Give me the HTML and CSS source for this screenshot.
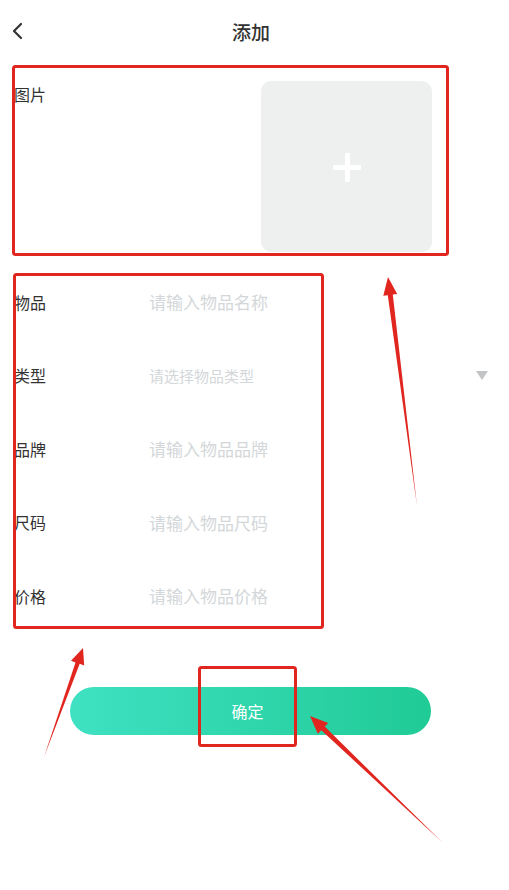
FILE: index.html
```html
<!DOCTYPE html>
<html lang="zh-CN">
<head>
    <meta charset="UTF-8">
    <meta name="viewport" content="width=device-width, initial-scale=1.0">
    <title>添加</title>
    <link rel="stylesheet" href="styles.css">
</head>
<body>
    <div class="page">
        <div class="header">
            <a class="back" href="#">
                <svg width="14" height="18" viewBox="0 0 14 18">
                    <polyline points="10,2 3,9 10,16" fill="none" stroke="#333" stroke-width="2.2" stroke-linecap="round" stroke-linejoin="round"/>
                </svg>
            </a>
            <h1 class="title">添加</h1>
            <span></span>
        </div>

        <div class="photo-row">
            <span class="label photo-label">图片</span>
            <div class="upload">
                <span class="plus"></span>
            </div>
        </div>

        <div class="form">
            <div class="row">
                <span class="label">物品</span>
                <span class="placeholder">请输入物品名称</span>
            </div>
            <div class="row">
                <span class="label">类型</span>
                <span class="placeholder small">请选择物品类型</span>
                <span class="arrow-down"></span>
            </div>
            <div class="row">
                <span class="label">品牌</span>
                <span class="placeholder">请输入物品品牌</span>
            </div>
            <div class="row">
                <span class="label">尺码</span>
                <span class="placeholder">请输入物品尺码</span>
            </div>
            <div class="row">
                <span class="label">价格</span>
                <span class="placeholder">请输入物品价格</span>
            </div>
        </div>

        <button class="submit">确定</button>

        <!-- annotation marks drawn over the screen -->
        <svg class="marks" width="509" height="890" viewBox="0 0 509 890">
            <g fill="none" stroke="#e0261f" stroke-width="3">
                <rect x="13.5" y="66.5" width="434" height="188" rx="2"/>
                <rect x="14.5" y="274.5" width="308" height="353" rx="2"/>
                <rect x="199.5" y="667.5" width="96" height="78" rx="2"/>
            </g>
            <g fill="#e0261f">
                <polygon points="388,277 397.2,294 392.8,294.6 417,506 387.8,295.2 383.3,295.8"/>
                <polygon points="83,648 84.2,665.4 79.7,663.8 44,757 75.5,662.4 71,660.7"/>
                <polygon points="310,716 328.2,723 324.7,726.6 443,843 321.3,730.2 317.8,733.8"/>
            </g>
        </svg>
    </div>
</body>
</html>
```

FILE: styles.css
```css
body {
    margin: 0;
    background-color: #ffffff;
    font-family: "Noto Sans CJK SC", "Noto Sans", sans-serif;
    color: #333333;
}
.page {
    position: relative;
    width: 509px;
    height: 890px;
    overflow: hidden;
}
.header {
    display: grid;
    grid-template-columns: 60px 1fr 60px;
    align-items: center;
    height: 62px;
}
.back {
    display: flex;
    padding-left: 11px;
}
.title {
    margin: 0;
    padding-right: 7px;
    text-align: center;
    font-size: 19px;
    font-weight: 500;
    color: #333333;
}
.photo-row {
    display: flex;
    margin-top: 19px;
    padding-left: 14px;
}
.label {
    font-size: 16px;
    color: #333333;
}
.photo-label {
    line-height: 22px;
    padding-top: 2px;
}
.upload {
    display: flex;
    align-items: center;
    justify-content: center;
    width: 171px;
    height: 171px;
    margin-left: auto;
    margin-right: 77px;
    border-radius: 10px;
    background-color: #edf0ef;
}
.plus {
    position: relative;
    width: 28px;
    height: 28px;
}
.plus::before,
.plus::after {
    content: "";
    position: absolute;
    background-color: #ffffff;
    border-radius: 1px;
}
.plus::before {
    left: 0;
    top: 12px;
    width: 28px;
    height: 5px;
}
.plus::after {
    left: 12px;
    top: 0;
    width: 5px;
    height: 29px;
}
.form {
    margin-top: 13px;
}
.row {
    display: flex;
    align-items: center;
    height: 73.5px;
    padding-left: 14px;
}
.row .label {
    width: 135px;
}
.placeholder {
    flex: 1;
    font-size: 17px;
    color: #d3d7d9;
}
.placeholder.small {
    font-size: 15px;
}
.arrow-down {
    width: 0;
    height: 0;
    margin-right: 21px;
    border-left: 6px solid transparent;
    border-right: 6px solid transparent;
    border-top: 9px solid #c2c4c5;
}
.submit {
    display: block;
    width: 361px;
    height: 48px;
    margin: 54px 0 0 70px;
    padding: 0 6px 0 0;
    border: none;
    border-radius: 24px;
    background: linear-gradient(to right, #3fe1c2, #20cb96);
    color: #ffffff;
    font-family: inherit;
    font-size: 16px;
}
.marks {
    position: absolute;
    top: 0;
    left: 0;
    pointer-events: none;
}
```
